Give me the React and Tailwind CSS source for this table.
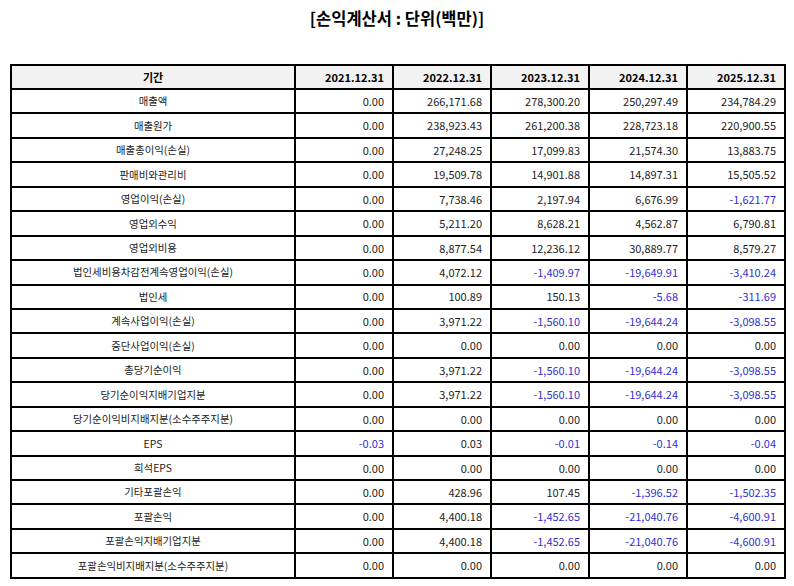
import React from "react";

const years = ["2021.12.31", "2022.12.31", "2023.12.31", "2024.12.31", "2025.12.31"];

const rows = [
  ["매출액", ["0.00", "266,171.68", "278,300.20", "250,297.49", "234,784.29"]],
  ["매출원가", ["0.00", "238,923.43", "261,200.38", "228,723.18", "220,900.55"]],
  ["매출총이익(손실)", ["0.00", "27,248.25", "17,099.83", "21,574.30", "13,883.75"]],
  ["판매비와관리비", ["0.00", "19,509.78", "14,901.88", "14,897.31", "15,505.52"]],
  ["영업이익(손실)", ["0.00", "7,738.46", "2,197.94", "6,676.99", "-1,621.77"]],
  ["영업외수익", ["0.00", "5,211.20", "8,628.21", "4,562.87", "6,790.81"]],
  ["영업외비용", ["0.00", "8,877.54", "12,236.12", "30,889.77", "8,579.27"]],
  ["법인세비용차감전계속영업이익(손실)", ["0.00", "4,072.12", "-1,409.97", "-19,649.91", "-3,410.24"]],
  ["법인세", ["0.00", "100.89", "150.13", "-5.68", "-311.69"]],
  ["계속사업이익(손실)", ["0.00", "3,971.22", "-1,560.10", "-19,644.24", "-3,098.55"]],
  ["중단사업이익(손실)", ["0.00", "0.00", "0.00", "0.00", "0.00"]],
  ["총당기순이익", ["0.00", "3,971.22", "-1,560.10", "-19,644.24", "-3,098.55"]],
  ["당기순이익지배기업지분", ["0.00", "3,971.22", "-1,560.10", "-19,644.24", "-3,098.55"]],
  ["당기순이익비지배지분(소수주주지분)", ["0.00", "0.00", "0.00", "0.00", "0.00"]],
  ["EPS", ["-0.03", "0.03", "-0.01", "-0.14", "-0.04"]],
  ["희석EPS", ["0.00", "0.00", "0.00", "0.00", "0.00"]],
  ["기타포괄손익", ["0.00", "428.96", "107.45", "-1,396.52", "-1,502.35"]],
  ["포괄손익", ["0.00", "4,400.18", "-1,452.65", "-21,040.76", "-4,600.91"]],
  ["포괄손익지배기업지분", ["0.00", "4,400.18", "-1,452.65", "-21,040.76", "-4,600.91"]],
  ["포괄손익비지배지분(소수주주지분)", ["0.00", "0.00", "0.00", "0.00", "0.00"]],
];

export default function App() {
  return (
    <div
      className="w-[794px] h-[586px] bg-white text-[#222]"
      style={{ fontFamily: '"Noto Sans CJK KR", "Noto Sans", sans-serif' }}
    >
      <h1 className="pt-[6px] h-[64px] text-center text-[16.5px] font-bold leading-[24px] text-black">
        [손익계산서 : 단위(백만)]
      </h1>
      <div className="px-[10px]">
        <table className="w-[774px] border-collapse border-2 border-black table-fixed text-[11px]">
          <colgroup>
            <col className="w-[284px]" />
            <col className="w-[98px]" />
            <col className="w-[98px]" />
            <col className="w-[98px]" />
            <col className="w-[98px]" />
            <col className="w-[98px]" />
          </colgroup>
          <thead>
            <tr className="h-[24px] bg-[#f2f2f2] font-bold text-black">
              <th className="border-2 border-black text-center font-bold p-0">기간</th>
              {years.map((y) => (
                <th key={y} className="border-2 border-black text-right font-bold pr-[8px] p-0">
                  {y}
                </th>
              ))}
            </tr>
          </thead>
          <tbody>
            {rows.map(([label, vals]) => (
              <tr key={label} className="h-[24.45px]">
                <td className="border-2 border-black text-center p-0 text-[10.4px]">{label}</td>
                {vals.map((v, i) => (
                  <td
                    key={i}
                    className={`border-2 border-black text-right p-0 pr-[8px] ${
                      v.startsWith("-") ? "text-[#3030d0]" : ""
                    }`}
                  >
                    {v}
                  </td>
                ))}
              </tr>
            ))}
          </tbody>
        </table>
      </div>
    </div>
  );
}
